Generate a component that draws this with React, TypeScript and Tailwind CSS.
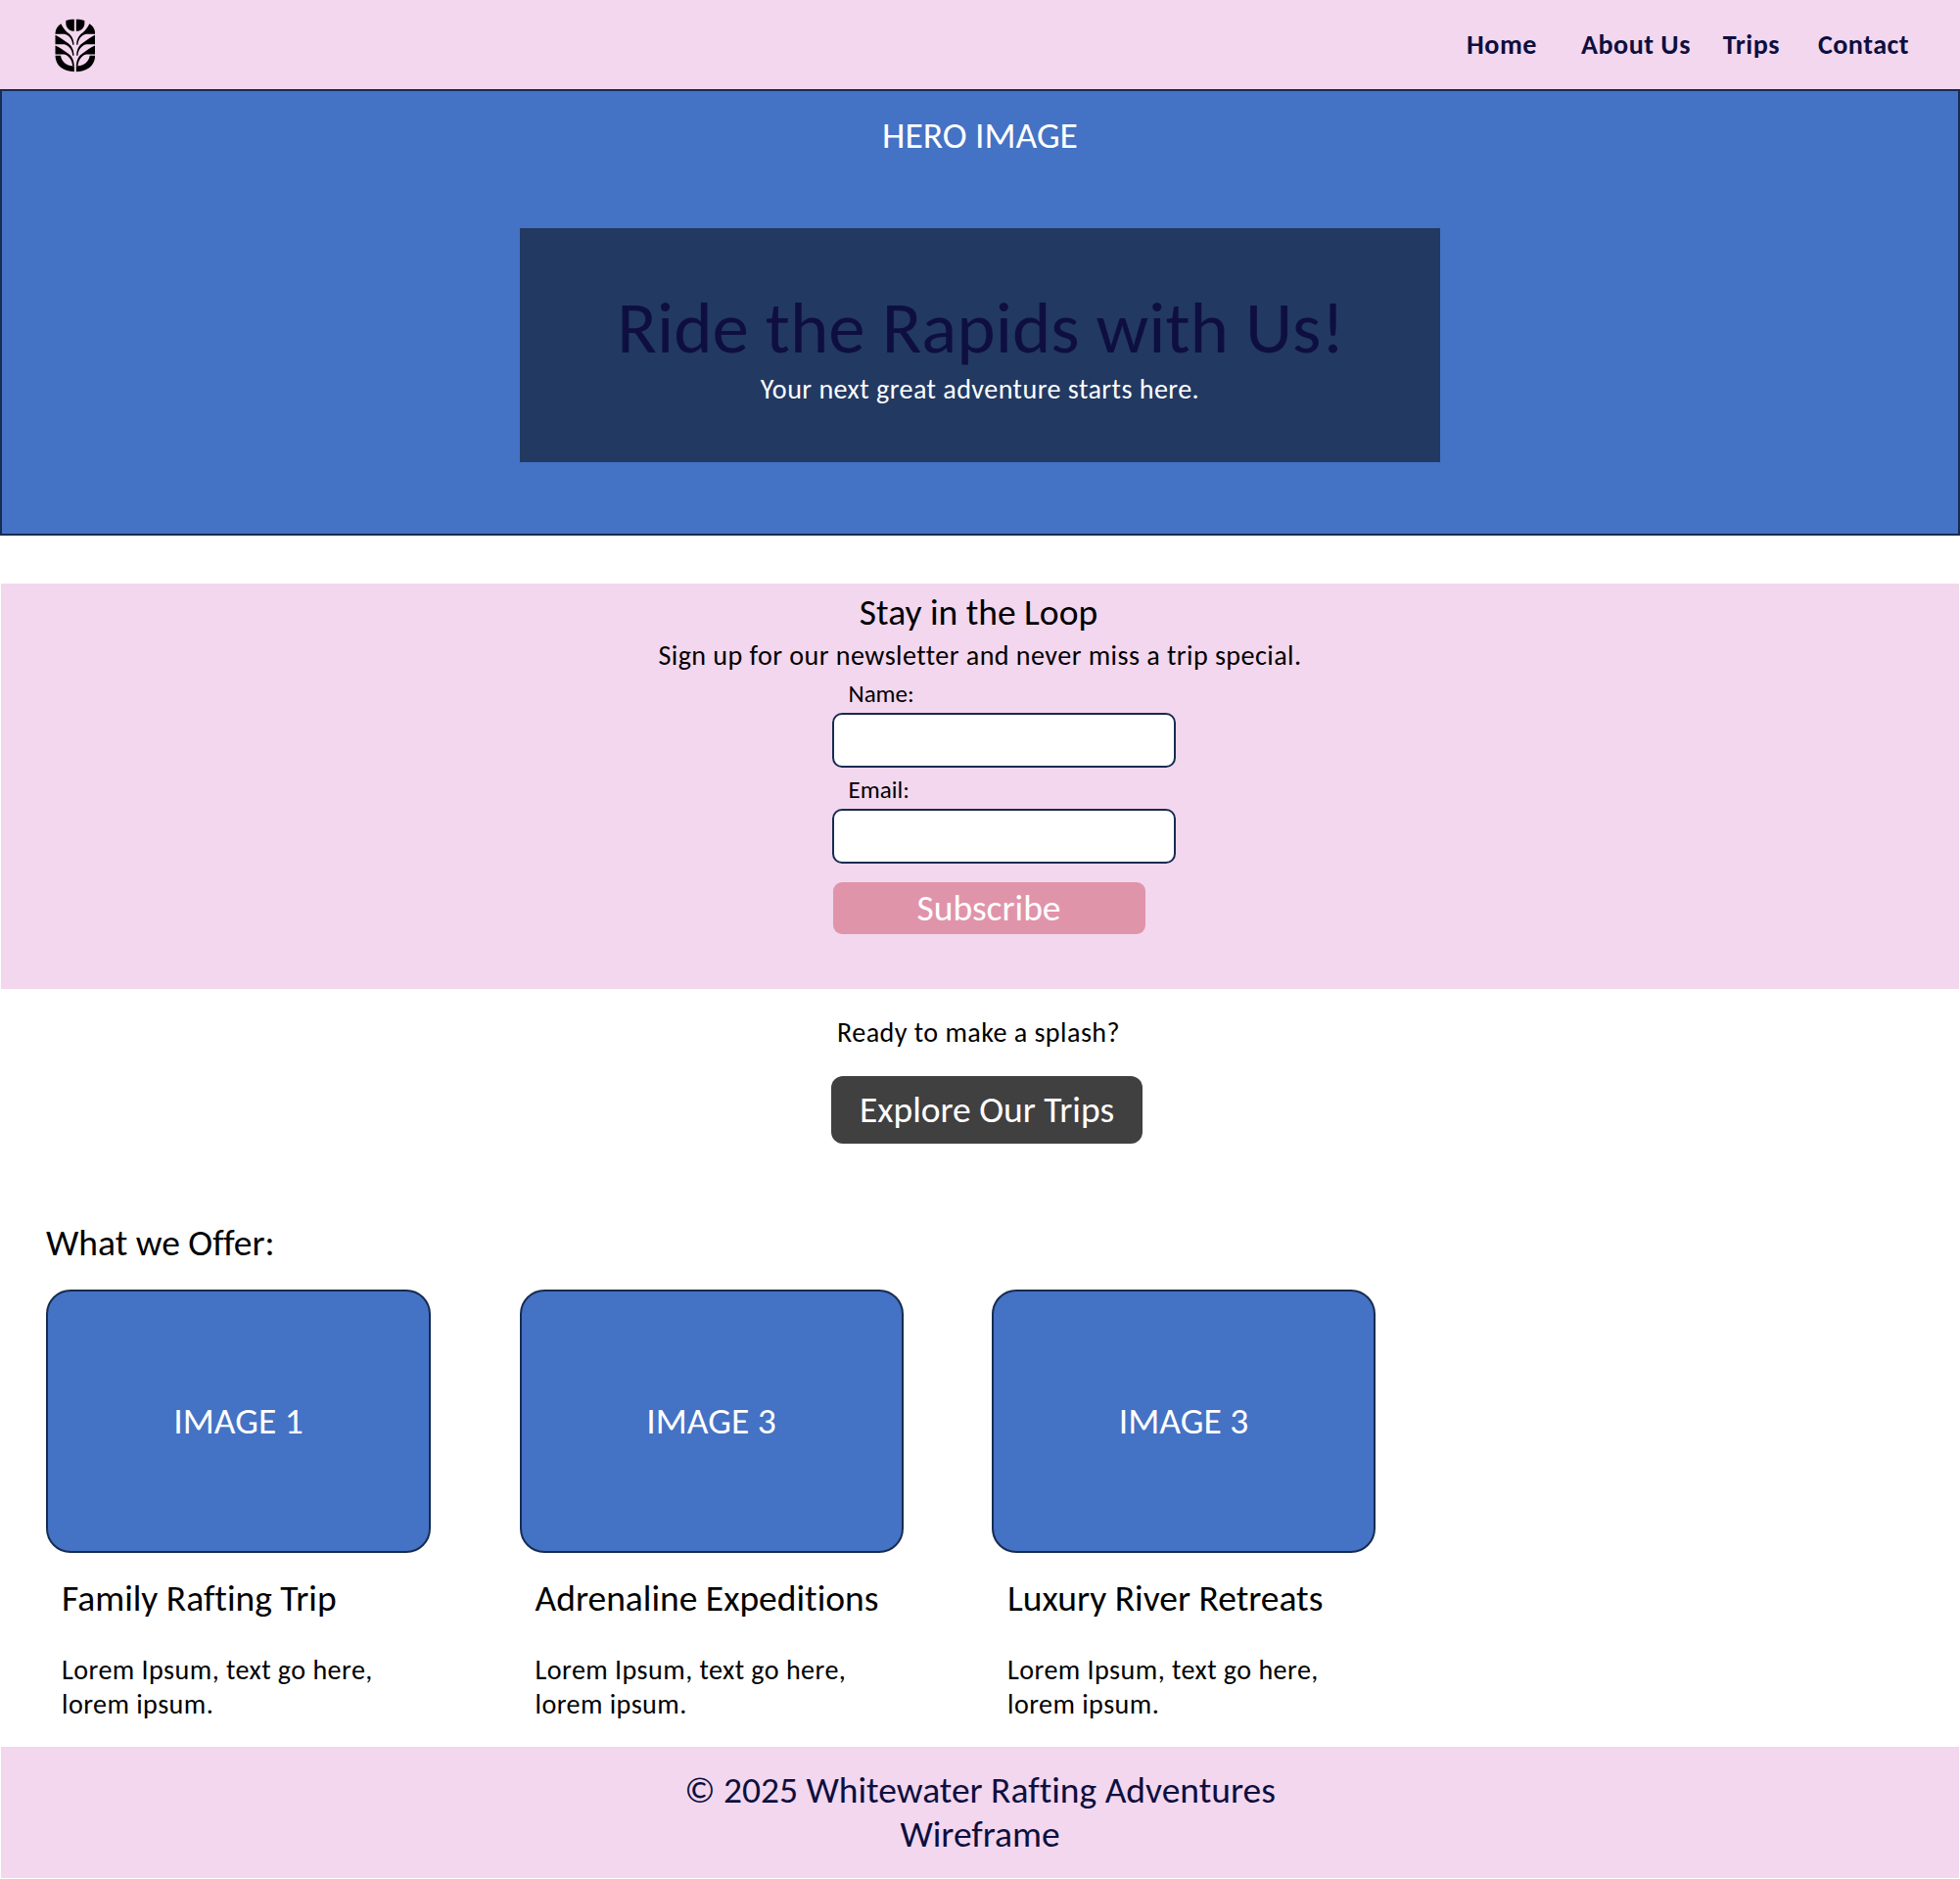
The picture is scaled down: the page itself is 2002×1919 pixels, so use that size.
const heading = 'text-[37.5px] leading-[45px]';
const body = 'text-[28.1px] leading-[35px] tracking-[0.45px]';

function LeafHalf() {
  return (
    <>
      <path d="M107.5 44.5V80.5C92 80 82 70 82 56V48C89 45.5 98 44.5 107.5 44.5Z" />
      <path d="M67 58C72 68 78 77 87 85C96 91 106 101 106.500 122H102.500C102 106 92 91.500 76 89H49.500V86C50 74 57 64 67 58Z" />
      <path d="M49.500 92C62 98 76 108 87 116.500C98 123 106 135 106.500 155H102.500C102 139 92 123.500 76 120.500H49.500Z" />
      <path d="M49.500 124.500C62 130 76 140 87 147.500C98 154 106.500 166 107.500 188H102.500C102 172 92 154.500 76 151.500H49.500Z" />
      <path d="M49.500 155.500H66C68 174 84 187.500 107.500 188V204.500C74 204.500 49.500 186 49.500 155.500Z" />
    </>
  );
}

function Logo() {
  return (
    <svg className="h-[55px] w-[41px]" viewBox="48 42 123 165" fill="#000" aria-label="Logo">
      <LeafHalf />
      <g transform="translate(221 0) scale(-1 1)">
        <LeafHalf />
      </g>
    </svg>
  );
}

function Field({ label, className }: { label: string; className: string }) {
  return (
    <label className={`block ${className}`}>
      <span className="ml-[17px] block w-fit text-[25px] leading-[30px]">{label}</span>
      <input className="mt-1 block h-14 w-[351px] rounded-[10px] border-2 border-[#172c51] bg-white px-3 text-[25px] outline-none" />
    </label>
  );
}

const trips = [
  { image: 'IMAGE 1', title: 'Family Rafting Trip' },
  { image: 'IMAGE 3', title: 'Adrenaline Expeditions' },
  { image: 'IMAGE 3', title: 'Luxury River Retreats' },
];

export default function App() {
  return (
    <div className="w-full bg-white font-['Carlito','Calibri','Lato',sans-serif] text-black [font-variant-ligatures:none]">
      <header className="flex h-[91px] items-start bg-[#f3d7ee] pl-14 pr-[52px] pt-[19px]">
        <Logo />
        <nav className="ml-auto mt-[9px] flex text-[28.1px] leading-[35px] font-bold tracking-[0.5px] text-[#0d0f3f]">
          <a className="mr-[45px]">Home</a>
          <a className="mr-[33px]">About Us</a>
          <a className="mr-[39px]">Trips</a>
          <a>Contact</a>
        </nav>
      </header>

      <section className="flex h-[456px] flex-col items-center border-2 border-[#172c51] bg-[#4472c4] pt-[23px] text-white">
        <p className={heading}>HERO IMAGE</p>
        <div className="mt-[72px] flex h-[239px] w-[940px] flex-col items-center bg-[#223962] pt-[57px]">
          <h1 className="ml-0.5 text-[75px] leading-[90px] text-[#0e0f40]">Ride the Rapids with Us!</h1>
          <p className={body}>Your next great adventure starts here.</p>
        </div>
      </section>

      <section className="mx-px mt-[49px] flex h-[414px] flex-col items-center bg-[#f3d7ee] pt-[7px]">
        <h2 className={`-ml-[3px] ${heading}`}>Stay in the Loop</h2>
        <p className={`mt-1 ${body}`}>Sign up for our newsletter and never miss a trip special.</p>
        <form className="ml-12 w-[351px]">
          <Field label="Name:" className="mt-[7px]" />
          <Field label="Email:" className="mt-2" />
          <button type="button" className="ml-px mt-[19px] flex h-[53px] w-[319px] justify-center rounded-[9px] bg-[#e094aa] pt-1 text-white">
            <span className={heading}>Subscribe</span>
          </button>
        </form>
      </section>

      <section className="flex flex-col items-center pt-[27px]">
        <p className={`-ml-[3px] ${body}`}>Ready to make a splash?</p>
        <button className="ml-[14px] mt-[27px] flex h-[69px] w-[318px] justify-center rounded-[12px] bg-[#404040] pt-3 text-white">
          <span className={heading}>Explore Our Trips</span>
        </button>
      </section>

      <section className="px-[47px] pt-[79px]">
        <h2 className={`w-fit ${heading}`}>What we Offer:</h2>
        <div className="mt-[25px] grid grid-cols-[393px_392px_392px] gap-x-[90.5px]">
          {trips.map((trip) => (
            <article key={trip.title}>
              <div className="flex h-[269px] items-center justify-center rounded-[25px] border-2 border-[#172c51] bg-[#4472c4] text-white">
                <span className={heading}>{trip.image}</span>
              </div>
              <h3 className={`ml-4 mt-6 w-fit ${heading}`}>{trip.title}</h3>
              <p className={`ml-4 mt-[33px] w-[350px] ${body}`}>Lorem Ipsum, text go here, lorem ipsum.</p>
            </article>
          ))}
        </div>
      </section>

      <footer className="mx-px mt-[26px] flex h-[134px] justify-center bg-[#f3d7ee] pt-[22px] text-center text-[#0d0f3f]">
        <p className={`w-[640px] ${heading}`}>© 2025 Whitewater Rafting Adventures Wireframe</p>
      </footer>
    </div>
  );
}
